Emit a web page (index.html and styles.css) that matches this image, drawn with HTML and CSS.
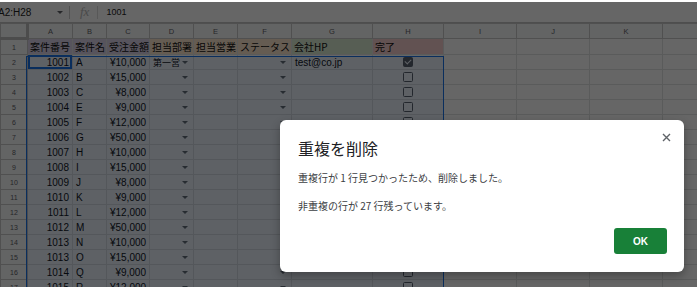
FILE: index.html
```html
<!DOCTYPE html>
<html lang="ja">
<head>
    <meta charset="UTF-8">
    <meta name="viewport" content="width=device-width, initial-scale=1.0">
    <title>重複を削除</title>
    <link rel="stylesheet" href="styles.css">
</head>
<body>
    <div class="window">
        <div class="formula-bar">
            <div class="name-box">A2:H28 <span class="caret"></span></div>
            <div class="fx">fx</div>
            <div class="value">1001</div>
        </div>

        <table class="sheet">
            <colgroup>
                <col class="c-row"><col class="c-a"><col class="c-b"><col class="c-c"><col class="c-d"><col class="c-e">
                <col class="c-f"><col class="c-g"><col class="c-h"><col class="c-x"><col class="c-x"><col class="c-x"><col class="c-x">
            </colgroup>
            <tr class="letters">
                <th class="corner"></th><th>A</th><th>B</th><th>C</th><th>D</th><th>E</th><th>F</th><th>G</th><th>H</th><th>I</th><th>J</th><th>K</th><th>L</th>
            </tr>
            <tr class="head">
                <th>1</th>
                <td class="purple">案件番号</td><td class="purple">案件名</td><td class="purple">受注金額</td>
                <td class="orange">担当部署</td><td class="orange">担当営業</td><td class="orange">ステータス</td>
                <td class="green">会社HP</td><td class="red">完了</td><td></td><td></td><td></td><td></td>
            </tr>
            <tr><th>2</th><td class="num active">1001</td><td>A</td><td class="num">¥10,000</td><td class="dd"><span class="chip">第一営</span></td><td></td><td class="dd"></td><td>test@co.jp</td><td class="ck"><span class="box checked"></span></td><td></td><td></td><td></td><td></td></tr>
            <tr><th>3</th><td class="num">1002</td><td>B</td><td class="num">¥15,000</td><td class="dd"></td><td></td><td class="dd"></td><td></td><td class="ck"><span class="box"></span></td><td></td><td></td><td></td><td></td></tr>
            <tr><th>4</th><td class="num">1003</td><td>C</td><td class="num">¥8,000</td><td class="dd"></td><td></td><td class="dd"></td><td></td><td class="ck"><span class="box"></span></td><td></td><td></td><td></td><td></td></tr>
            <tr><th>5</th><td class="num">1004</td><td>E</td><td class="num">¥9,000</td><td class="dd"></td><td></td><td class="dd"></td><td></td><td class="ck"><span class="box"></span></td><td></td><td></td><td></td><td></td></tr>
            <tr><th>6</th><td class="num">1005</td><td>F</td><td class="num">¥12,000</td><td class="dd"></td><td></td><td class="dd"></td><td></td><td class="ck"><span class="box"></span></td><td></td><td></td><td></td><td></td></tr>
            <tr><th>7</th><td class="num">1006</td><td>G</td><td class="num">¥50,000</td><td class="dd"></td><td></td><td class="dd"></td><td></td><td class="ck"><span class="box"></span></td><td></td><td></td><td></td><td></td></tr>
            <tr><th>8</th><td class="num">1007</td><td>H</td><td class="num">¥10,000</td><td class="dd"></td><td></td><td class="dd"></td><td></td><td class="ck"><span class="box"></span></td><td></td><td></td><td></td><td></td></tr>
            <tr><th>9</th><td class="num">1008</td><td>I</td><td class="num">¥15,000</td><td class="dd"></td><td></td><td class="dd"></td><td></td><td class="ck"><span class="box"></span></td><td></td><td></td><td></td><td></td></tr>
            <tr><th>10</th><td class="num">1009</td><td>J</td><td class="num">¥8,000</td><td class="dd"></td><td></td><td class="dd"></td><td></td><td class="ck"><span class="box"></span></td><td></td><td></td><td></td><td></td></tr>
            <tr><th>11</th><td class="num">1010</td><td>K</td><td class="num">¥9,000</td><td class="dd"></td><td></td><td class="dd"></td><td></td><td class="ck"><span class="box"></span></td><td></td><td></td><td></td><td></td></tr>
            <tr><th>12</th><td class="num">1011</td><td>L</td><td class="num">¥12,000</td><td class="dd"></td><td></td><td class="dd"></td><td></td><td class="ck"><span class="box"></span></td><td></td><td></td><td></td><td></td></tr>
            <tr><th>13</th><td class="num">1012</td><td>M</td><td class="num">¥50,000</td><td class="dd"></td><td></td><td class="dd"></td><td></td><td class="ck"><span class="box"></span></td><td></td><td></td><td></td><td></td></tr>
            <tr><th>14</th><td class="num">1013</td><td>N</td><td class="num">¥10,000</td><td class="dd"></td><td></td><td class="dd"></td><td></td><td class="ck"><span class="box"></span></td><td></td><td></td><td></td><td></td></tr>
            <tr><th>15</th><td class="num">1013</td><td>O</td><td class="num">¥15,000</td><td class="dd"></td><td></td><td class="dd"></td><td></td><td class="ck"><span class="box"></span></td><td></td><td></td><td></td><td></td></tr>
            <tr><th>16</th><td class="num">1014</td><td>Q</td><td class="num">¥9,000</td><td class="dd"></td><td></td><td class="dd"></td><td></td><td class="ck"><span class="box"></span></td><td></td><td></td><td></td><td></td></tr>
            <tr><th>17</th><td class="num">1015</td><td>R</td><td class="num">¥12,000</td><td class="dd"></td><td></td><td class="dd"></td><td></td><td class="ck"><span class="box"></span></td><td></td><td></td><td></td><td></td></tr>
            <tr><th>18</th><td class="num">1016</td><td>S</td><td class="num">¥8,000</td><td class="dd"></td><td></td><td class="dd"></td><td></td><td class="ck"><span class="box"></span></td><td></td><td></td><td></td><td></td></tr>
        </table>

        <div class="range"></div>

        <div class="overlay">
            <div class="dialog">
                <svg class="close" width="9" height="9" viewBox="0 0 9 9">
                    <path d="M1 1L8 8M8 1L1 8" stroke="#5f6368" stroke-width="1.4" fill="none"/>
                </svg>
                <h2>重複を削除</h2>
                <p>重複行が 1 行見つかったため、削除しました。</p>
                <p class="second">非重複の行が 27 行残っています。</p>
                <div class="actions">
                    <button type="button">OK</button>
                </div>
            </div>
        </div>
    </div>
</body>
</html>
```

FILE: styles.css
```css
* {
    box-sizing: border-box;
}
body {
    margin: 0;
    background: #fff;
    font-family: "Liberation Sans", Arial, "Noto Sans CJK JP", sans-serif;
}
.window {
    position: relative;
    width: 697px;
    height: 285px;
    margin-top: 2px;
    overflow: hidden;
    background: #fff;
}

/* formula bar */
.formula-bar {
    display: flex;
    align-items: center;
    height: 21px;
    border-bottom: 1px solid #c4c4c4;
    font-size: 10px;
    color: #222;
}
.name-box {
    display: flex;
    align-items: center;
    justify-content: space-between;
    width: 72px;
    height: 13px;
    margin-left: -2px;
    padding-right: 6px;
    border-right: 1px solid #ccc;
}
.caret {
    width: 0;
    height: 0;
    border-left: 3px solid transparent;
    border-right: 3px solid transparent;
    border-top: 3px solid #5f6368;
}
.fx {
    height: 13px;
    padding: 0 8px 0 10px;
    border-right: 1px solid #ddd;
    font-family: "Liberation Serif", serif;
    font-style: italic;
    font-size: 13px;
    line-height: 12px;
    color: #b8b8b8;
}
.value {
    padding-left: 8px;
    font-size: 9px;
}

/* grid */
.sheet {
    border-collapse: collapse;
    table-layout: fixed;
    width: 735px;
}
.c-row { width: 27px; }
.c-a { width: 45px; }
.c-b { width: 34px; }
.c-c { width: 43px; }
.c-d { width: 44px; }
.c-e { width: 44px; }
.c-f { width: 54px; }
.c-g { width: 81px; }
.c-h { width: 71px; }
.c-x { width: 73px; }
.sheet th,
.sheet td {
    padding: 0 3px;
    border: 1px solid #e2e3e3;
    white-space: nowrap;
    overflow: hidden;
}
.sheet th {
    background: #f8f9fa;
    border-color: #c7c7c7;
    color: #5f6368;
    font-weight: normal;
    font-size: 7px;
    text-align: center;
}
.letters {
    height: 17px;
}
.letters th {
    font-size: 7.5px;
}
.sheet th.corner {
    border-right: 3px solid #bdbdbd;
    border-bottom: 3px solid #bdbdbd;
}
.sheet tr {
    height: 15px;
}
.sheet tr.head {
    height: 16px;
}
.sheet td {
    font-size: 10px;
    line-height: 13px;
    color: #111;
}
.head td {
    font-family: "Noto Sans CJK JP", sans-serif;
    padding: 0 2px;
}
.purple { background: #d9d2e9; }
.orange { background: #fce5cd; }
.green { background: #d9ead3; }
.red { background: #f4cccc; }

.sheet td.num {
    text-align: right;
}
.sheet td.active {
    box-shadow: inset 0 0 0 2px #1a73e8;
}
.sheet td.dd {
    position: relative;
    padding-right: 10px;
    font-family: "Noto Sans CJK JP", sans-serif;
}
.chip {
    font-size: 9px;
}
.dd::after {
    content: "";
    position: absolute;
    right: 5px;
    top: 6px;
    border-left: 3px solid transparent;
    border-right: 3px solid transparent;
    border-top: 3px solid #6b6f74;
}
.sheet td.ck {
    text-align: center;
    font-size: 0;
}
.box {
    display: inline-block;
    width: 10px;
    height: 10px;
    border: 1.5px solid #5f6368;
    border-radius: 1.5px;
    vertical-align: middle;
}
.box.checked {
    position: relative;
    background: #5f6368;
}
.box.checked::after {
    content: "";
    position: absolute;
    left: 2px;
    top: 0;
    width: 3px;
    height: 5px;
    border-right: 1.5px solid #fff;
    border-bottom: 1.5px solid #fff;
    transform: rotate(45deg);
}

/* selected range A2:H28 */
.range {
    position: absolute;
    left: 26px;
    top: 54px;
    width: 418px;
    height: 300px;
    border: 1px solid #1a73e8;
    background: rgba(14, 101, 235, 0.08);
}

/* dialog */
.overlay {
    position: absolute;
    inset: 0;
    padding: 118px 0 0 280px;
    background: rgba(0, 0, 0, 0.6);
}
.dialog {
    position: relative;
    width: 404px;
    padding: 18px 17px 18px 18px;
    background: #fff;
    border-radius: 6px;
    box-shadow: 0 4px 10px rgba(0, 0, 0, 0.3);
    font-family: "Noto Sans CJK JP", sans-serif;
}
.close {
    position: absolute;
    top: 13px;
    right: 13px;
}
.dialog h2 {
    margin: 0;
    font-size: 16px;
    line-height: 20px;
    font-weight: normal;
    color: #202124;
}
.dialog p {
    margin: 13px 0 0;
    font-size: 10px;
    line-height: 14px;
    color: #3c4043;
}
.dialog p.second {
    margin-top: 14px;
}
.actions {
    display: flex;
    justify-content: flex-end;
    margin-top: 15px;
}
.actions button {
    width: 53px;
    height: 26px;
    border: none;
    border-radius: 3px;
    background: #188038;
    color: #fff;
    font-family: "Liberation Sans", Arial, sans-serif;
    font-weight: bold;
    font-size: 10px;
    cursor: pointer;
}
```
